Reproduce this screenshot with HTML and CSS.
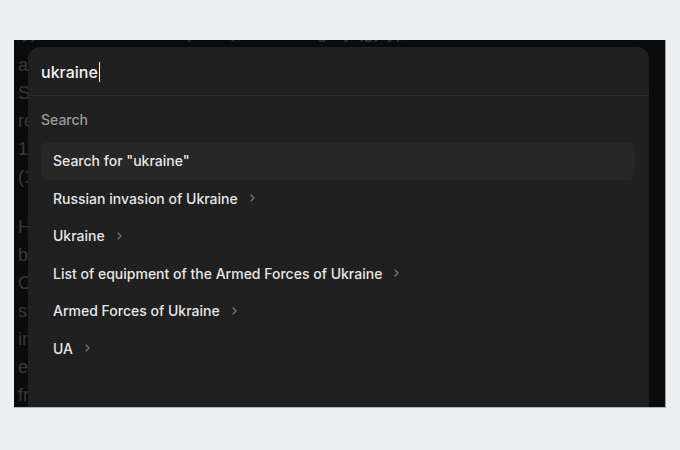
FILE: index.html
```html
<!DOCTYPE html>
<html>
<head>
<meta charset="utf-8">
<link rel="stylesheet" href="styles.css">
</head>
<body>
<div class="viewport">
  <div class="article">
    <p class="first">ly), and the Crimean (1954), with Hungary (gy y), the</p>
    <p>and Moldova to the southwest, in the country</p>
    <p>Sea of Azov to the south and southeast, where</p>
    <p>remains an independent country since</p>
    <p>1991, after the dissolution of the Soviet Union</p>
    <p>(1991), when it declared independence.</p>
    <p class="gap">Historically, the territory has been inhabited</p>
    <p>by Slavic tribes and early states of Kievan Rus'</p>
    <p>Cossack hetmanate and later the Russian Empire</p>
    <p>states emerged in the aftermath of the revolution</p>
    <p>in 1917 and the Ukrainian People's Republic was</p>
    <p>established, followed by the Soviet republic</p>
    <p>from 1922 until independence in 1991.</p>
  </div>
  <div class="palette">
    <div class="input-row">
      <span class="query">ukraine</span><span class="caret"></span>
    </div>
    <div class="section-label">Search</div>
    <ul class="results">
      <li class="row active"><span>Search for "ukraine"</span></li>
      <li class="row"><span>Russian invasion of Ukraine</span><svg class="chev" viewBox="0 0 5 8" width="5" height="8"><path d="M1 1l3 3-3 3" fill="none" stroke="currentColor" stroke-width="1.1" stroke-linecap="round" stroke-linejoin="round"/></svg></li>
      <li class="row"><span>Ukraine</span><svg class="chev" viewBox="0 0 5 8" width="5" height="8"><path d="M1 1l3 3-3 3" fill="none" stroke="currentColor" stroke-width="1.1" stroke-linecap="round" stroke-linejoin="round"/></svg></li>
      <li class="row"><span>List of equipment of the Armed Forces of Ukraine</span><svg class="chev" viewBox="0 0 5 8" width="5" height="8"><path d="M1 1l3 3-3 3" fill="none" stroke="currentColor" stroke-width="1.1" stroke-linecap="round" stroke-linejoin="round"/></svg></li>
      <li class="row"><span>Armed Forces of Ukraine</span><svg class="chev" viewBox="0 0 5 8" width="5" height="8"><path d="M1 1l3 3-3 3" fill="none" stroke="currentColor" stroke-width="1.1" stroke-linecap="round" stroke-linejoin="round"/></svg></li>
      <li class="row"><span>UA</span><svg class="chev" viewBox="0 0 5 8" width="5" height="8"><path d="M1 1l3 3-3 3" fill="none" stroke="currentColor" stroke-width="1.1" stroke-linecap="round" stroke-linejoin="round"/></svg></li>
    </ul>
  </div>
</div>
</body>
</html>
```
FILE: styles.css
```css
* { box-sizing: border-box; }
html, body { margin: 0; padding: 0; }
body {
  background: #eceff2;
  width: 680px;
  height: 450px;
  padding: 40px 14px 0 14px;
  font-family: Inter, "Noto Sans", sans-serif;
}
.viewport {
  position: relative;
  width: 652px;
  height: 368px;
  background: #0b0b0b;
  overflow: hidden;
  border-right: 1px solid #9a9a9a;
  border-bottom: 1px solid #b5b5b5;
}
.article {
  margin-top: -22px;
  padding-left: 4px;
  font-family: "Liberation Sans", Arial, sans-serif;
  font-size: 18px;
  line-height: 28px;
  color: #3a3a3a;
  white-space: nowrap;
}
.article p { margin: 0; }
.article p.first { margin-bottom: 5px; }
.article p.gap { margin-top: 22px; }
.palette {
  position: absolute;
  left: 14px;
  top: 7px;
  width: 621px;
  height: 400px;
  background: #202020;
  border-radius: 12px 12px 0 0;
}
.input-row {
  height: 49px;
  display: flex;
  align-items: center;
  padding-left: 13px;
  padding-top: 2px;
  border-bottom: 1px solid #2d2d2d;
}
.query {
  color: #f2f2f2;
  font-size: 16px;
  font-weight: 500;
}
.caret {
  display: inline-block;
  width: 1.5px;
  height: 20px;
  background: #f2f2f2;
  margin-left: 1px;
}
.section-label {
  padding-left: 13px;
  height: 46px;
  display: flex;
  align-items: center;
  color: #9b9b9b;
  font-size: 14px;
  font-weight: 500;
}
.results {
  list-style: none;
  margin: 0 14px 0 13px;
  padding: 0;
}
.row {
  height: 37.5px;
  display: flex;
  align-items: center;
  gap: 12px;
  padding-left: 12px;
  color: #e6e6e6;
  font-size: 14px;
  font-weight: 500;
  border-radius: 8px;
}
.row.active { background: #272727; }
.chev { color: #7e7e7e; width: 5px; height: 8px; }
```
